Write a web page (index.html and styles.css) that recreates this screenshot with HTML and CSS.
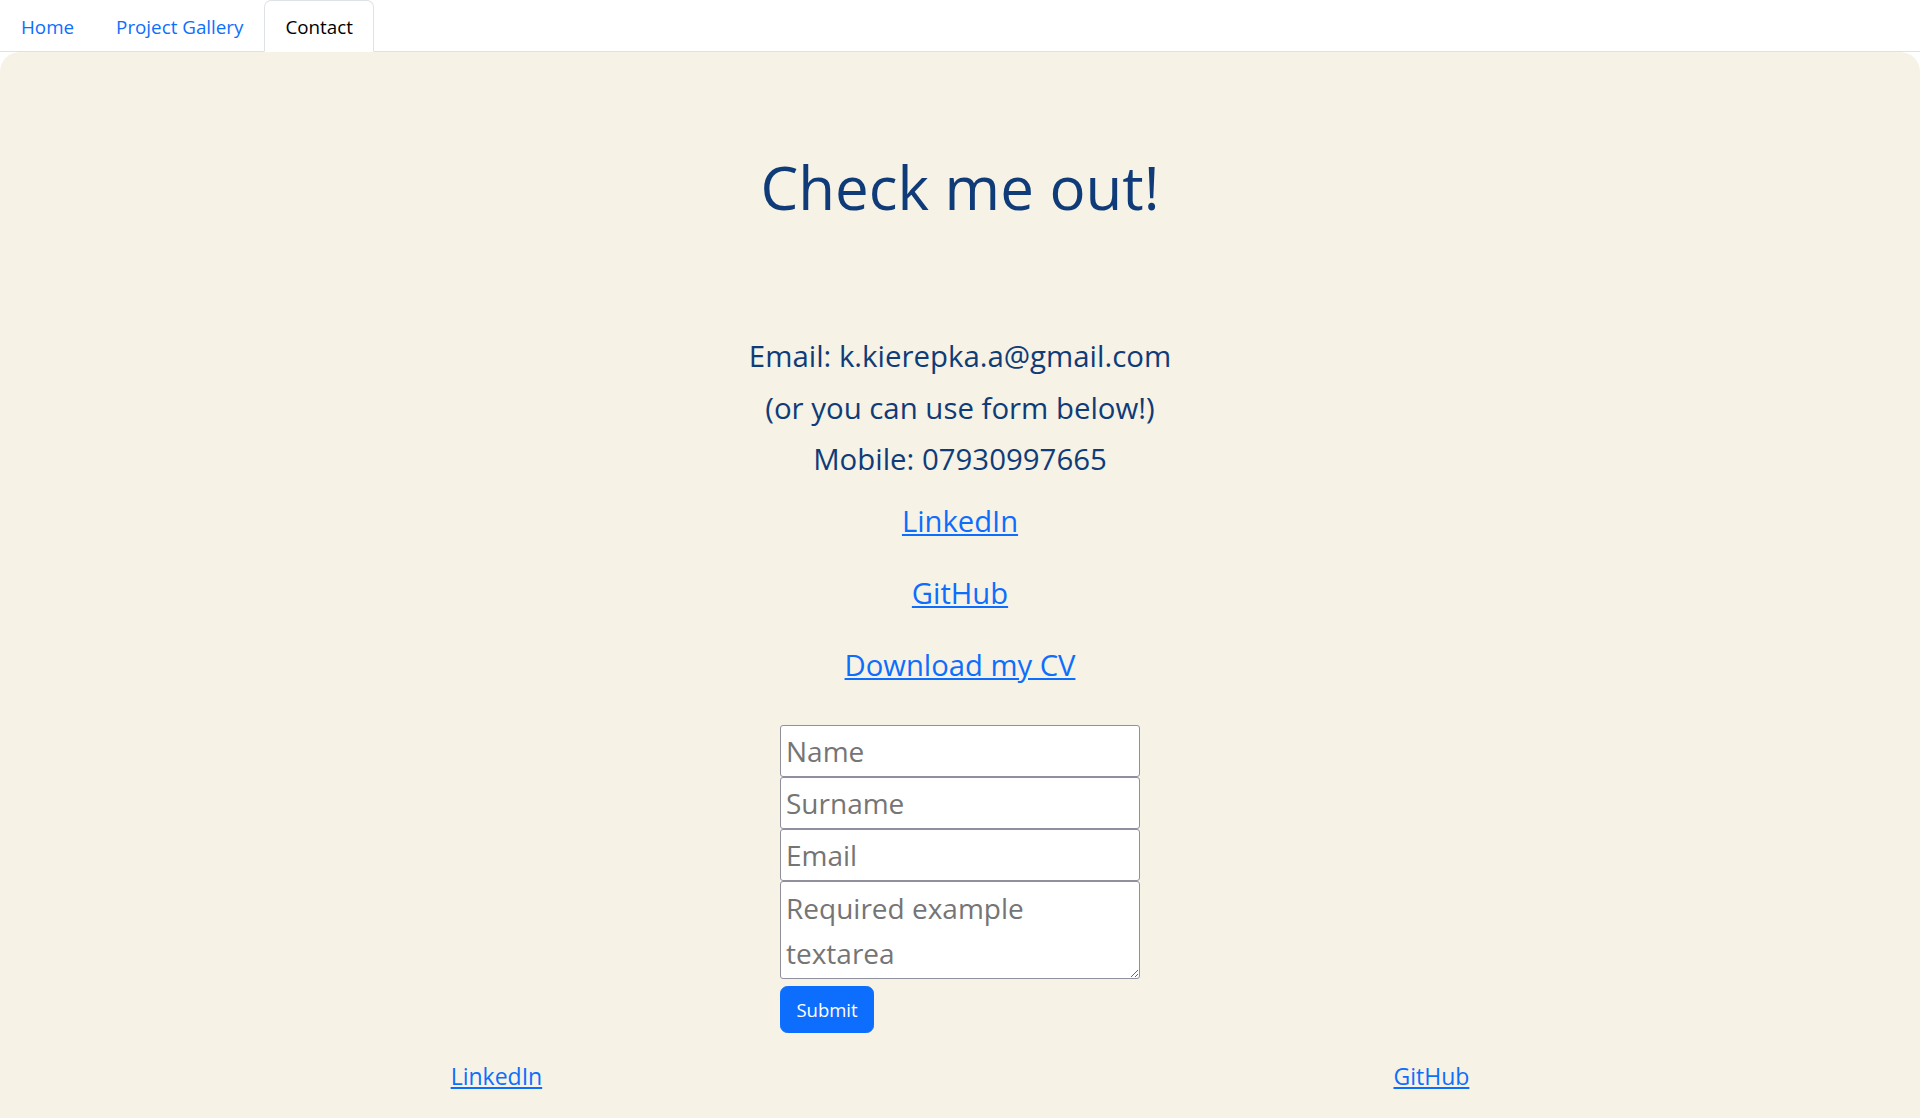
FILE: index.html
```html
<!DOCTYPE html>
<html lang="en">
<head>
<meta charset="utf-8">
<title>Contact</title>
<link rel="stylesheet" href="styles.css">
</head>
<body>
<nav class="tabs">
  <a class="tab" href="#">Home</a>
  <a class="tab" href="#">Project Gallery</a>
  <a class="tab active" href="#">Contact</a>
</nav>
<main class="panel">
  <h1 class="title">Check me out!</h1>
  <div class="info">
    <p class="line">Email: k.kierepka.a@gmail.com</p>
    <p class="line">(or you can use form below!)</p>
    <p class="line">Mobile: 07930997665</p>
  </div>
  <div class="links">
    <a class="big-link" href="#">LinkedIn</a>
    <a class="big-link" href="#">GitHub</a>
    <a class="big-link" href="#">Download my CV</a>
  </div>
  <form class="form">
    <input class="field" type="text" placeholder="Name">
    <input class="field" type="text" placeholder="Surname">
    <input class="field" type="email" placeholder="Email">
    <textarea class="field area" placeholder="Required example textarea"></textarea>
    <button class="submit" type="button">Submit</button>
  </form>
  <footer class="footer">
    <a class="foot-link" href="#">LinkedIn</a>
    <a class="foot-link" href="#">GitHub</a>
  </footer>
</main>
</body>
</html>
```
FILE: styles.css
```css
* { box-sizing: border-box; }
html, body { margin: 0; padding: 0; }
body {
  font-family: "Open Sans", "Noto Sans", sans-serif;
  background: #ffffff;
  color: #212529;
  height: 1118px;
  display: flex;
  flex-direction: column;
}
.tabs {
  display: flex;
  height: 52px;
  border-bottom: 1px solid #dee2e6;
}
.tab {
  display: block;
  padding: 0 20px;
  line-height: 52px;
  height: 52px;
  font-size: 18.8px;
  color: #0d6efd;
  text-decoration: none;
  border: 1px solid transparent;
  border-radius: 7px 7px 0 0;
}
.tab.active {
  color: #000;
  background: #fff;
  border-color: #dee2e6 #dee2e6 #fff;
}
.panel {
  flex: 1;
  background: #f6f2e5;
  border-radius: 20px 20px 0 0;
  display: flex;
  flex-direction: column;
  align-items: center;
}
.title {
  margin: 95px 0 0;
  font-size: 60px;
  font-weight: 400;
  line-height: 80px;
  color: #0f3c78;
}
.info { margin-top: 104px; text-align: center; }
.line {
  margin: 0;
  font-size: 29.4px;
  line-height: 51.5px;
  color: #0f3c78;
}
.links {
  display: flex;
  flex-direction: column;
  align-items: center;
  gap: 30px;
  margin-top: 14px;
}
.big-link {
  font-size: 29.2px;
  line-height: 42px;
  color: #0d6efd;
  text-decoration: underline;
}
.form {
  width: 360px;
  margin-top: 39px;
  display: flex;
  flex-direction: column;
  align-items: flex-start;
}
.field {
  width: 360px;
  height: 52px;
  margin: 0;
  padding: 0 5px;
  font-family: inherit;
  font-size: 28px;
  color: #212529;
  background: #fff;
  border: 1px solid #8f8f9d;
  border-radius: 3px;
}
.field::placeholder { color: #757575; }
.area {
  height: 98px;
  padding: 4px 5px 0;
  line-height: 45px;
  resize: vertical;
}
.submit {
  margin-top: 7px;
  width: 94px;
  height: 47px;
  font-family: inherit;
  font-size: 18.5px;
  color: #fff;
  background: #0d6efd;
  border: 1px solid #0d6efd;
  border-radius: 7.5px;
}
.footer {
  align-self: stretch;
  display: flex;
  justify-content: space-around;
  padding: 26px 25px 0;
}
.foot-link {
  font-size: 23px;
  line-height: 34px;
  color: #0d6efd;
  text-decoration: underline;
}
```
